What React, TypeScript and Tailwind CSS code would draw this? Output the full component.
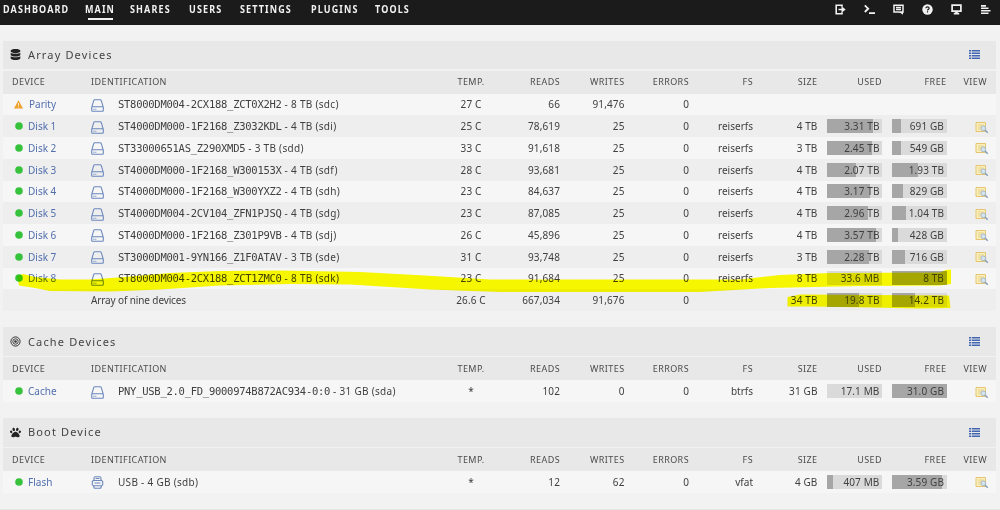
import { FaDatabase, FaPaw } from "react-icons/fa";

type Bar = { text: string; pct: number };

type Device = {
  name: string;
  status: "ok" | "warning";
  model: string;
  info: string;
  temp: string;
  reads: string;
  writes: string;
  errors: string;
  fs?: string;
  size?: string;
  used?: Bar;
  free?: Bar;
  usb?: boolean;
};

const NAV = [
  { label: "DASHBOARD", className: "w-[82px]" },
  { label: "MAIN", className: "w-[45px]" },
  { label: "SHARES", className: "w-[59px]" },
  { label: "USERS", className: "w-[51px]" },
  { label: "SETTINGS", className: "w-[71px]" },
  { label: "PLUGINS", className: "w-[64px]" },
  { label: "TOOLS", className: "w-[40px]" }
];

const ARRAY_DEVICES: Device[] = [
  { name: "Parity", status: "warning", model: "ST8000DM004-2CX188_ZCT0X2H2", info: "8 TB (sdc)", temp: "27 C", reads: "66", writes: "91,476", errors: "0" },
  { name: "Disk 1", status: "ok", model: "ST4000DM000-1F2168_Z3032KDL", info: "4 TB (sdi)", temp: "25 C", reads: "78,619", writes: "25", errors: "0", fs: "reiserfs", size: "4 TB", used: { text: "3.31 TB", pct: 83 }, free: { text: "691 GB", pct: 17 } },
  { name: "Disk 2", status: "ok", model: "ST33000651AS_Z290XMD5", info: "3 TB (sdd)", temp: "33 C", reads: "91,618", writes: "25", errors: "0", fs: "reiserfs", size: "3 TB", used: { text: "2.45 TB", pct: 82 }, free: { text: "549 GB", pct: 18 } },
  { name: "Disk 3", status: "ok", model: "ST4000DM000-1F2168_W300153X", info: "4 TB (sdf)", temp: "28 C", reads: "93,681", writes: "25", errors: "0", fs: "reiserfs", size: "4 TB", used: { text: "2.07 TB", pct: 52 }, free: { text: "1.93 TB", pct: 48 } },
  { name: "Disk 4", status: "ok", model: "ST4000DM000-1F2168_W300YXZ2", info: "4 TB (sdh)", temp: "23 C", reads: "84,637", writes: "25", errors: "0", fs: "reiserfs", size: "4 TB", used: { text: "3.17 TB", pct: 79 }, free: { text: "829 GB", pct: 21 } },
  { name: "Disk 5", status: "ok", model: "ST4000DM004-2CV104_ZFN1PJSQ", info: "4 TB (sdg)", temp: "23 C", reads: "87,085", writes: "25", errors: "0", fs: "reiserfs", size: "4 TB", used: { text: "2.96 TB", pct: 74 }, free: { text: "1.04 TB", pct: 26 } },
  { name: "Disk 6", status: "ok", model: "ST4000DM000-1F2168_Z301P9VB", info: "4 TB (sdj)", temp: "26 C", reads: "45,896", writes: "25", errors: "0", fs: "reiserfs", size: "4 TB", used: { text: "3.57 TB", pct: 89 }, free: { text: "428 GB", pct: 11 } },
  { name: "Disk 7", status: "ok", model: "ST3000DM001-9YN166_Z1F0ATAV", info: "3 TB (sde)", temp: "31 C", reads: "93,748", writes: "25", errors: "0", fs: "reiserfs", size: "3 TB", used: { text: "2.28 TB", pct: 76 }, free: { text: "716 GB", pct: 24 } },
  { name: "Disk 8", status: "ok", model: "ST8000DM004-2CX188_ZCT1ZMC0", info: "8 TB (sdk)", temp: "23 C", reads: "91,684", writes: "25", errors: "0", fs: "reiserfs", size: "8 TB", used: { text: "33.6 MB", pct: 0 }, free: { text: "8 TB", pct: 100 } }
];

const CACHE_DEVICES: Device[] = [
  { name: "Cache", status: "ok", model: "PNY_USB_2.0_FD_9000974B872AC934-0:0", info: "31 GB (sda)", temp: "*", reads: "102", writes: "0", errors: "0", fs: "btrfs", size: "31 GB", used: { text: "17.1 MB", pct: 0 }, free: { text: "31.0 GB", pct: 100 } }
];

const BOOT_DEVICES: Device[] = [
  { name: "Flash", status: "ok", model: "", info: "USB - 4 GB (sdb)", temp: "*", reads: "12", writes: "62", errors: "0", fs: "vfat", size: "4 GB", used: { text: "407 MB", pct: 10 }, free: { text: "3.59 GB", pct: 91 }, usb: true }
];

const GRID = "grid grid-cols-[88px_349px_62px_58px_64.5px_64.5px_64px_64.5px_64.5px_64.5px_48.5px] items-center";

const DriveIcon = () => (
  <svg width="13" height="13" viewBox="0 0 13 13" fill="none" stroke="#6c88bd" strokeWidth="1.1">
    <path d="M.7 8.3 2.7 1.6Q3 .7 3.8.7h5.4q.8 0 1.1.9l2 6.7M.7 8.3q0-.6.7-.6h10.2q.7 0 .7.6v3.3q0 .7-.7.7H1.4q-.7 0-.7-.7z" />
    <path d="M2.3 10.2h1.2M4.3 10.2h1" />
  </svg>
);

const UsbIcon = () => (
  <svg width="13" height="13" viewBox="0 0 13 13" fill="none" stroke="#6c88bd" strokeWidth="1.1">
    <path d="M3 4.5V2Q3 .7 4.3.7h4.4Q10 .7 10 2v2.5M1.3 5.5l1-1h8.4l1 1v3.3l-1 1H2.3l-1-1zM2.5 9.8l.5 1.7q.2.8 1 .8h5q.8 0 1-.8l.5-1.7M3.5 7h6M4.5 2.5h4" />
  </svg>
);

const ViewIcon = () => (
  <svg width="14" height="13" viewBox="0 0 14 13" fill="none">
    <path d="M1 1.5h9.5v9H1z" fill="#fbf0bd" stroke="#e3c46f" />
    <path d="M3 4h5.500M3 6h3M3 8h2" stroke="#e6cf85" />
    <circle cx="8.300" cy="7.300" r="2.400" fill="#d6e4ee" stroke="#a3b7c6" />
    <path d="m10.200 9.200 2.500 2.500" stroke="#859eb8" strokeWidth="1.500" />
  </svg>
);

const BullseyeIcon = () => (
  <svg width="11" height="11" viewBox="0 0 11 11" fill="none" stroke="#333">
    <circle cx="5.5" cy="5.5" r="4.6" strokeWidth="1" />
    <circle cx="5.5" cy="5.5" r="2.7" strokeWidth=".9" />
    <circle cx="5.5" cy="5.5" r="1.3" fill="#333" stroke="none" />
  </svg>
);

const ListIcon = () => (
  <svg width="11" height="9" viewBox="0 0 11 9" fill="#4267b0">
    <path d="M0 0h2v1.5H0zM2.7 0H11v1.5H2.7zM0 2.5h2V4H0zM2.7 2.5H11V4H2.7zM0 5h2v1.5H0zM2.7 5H11v1.5H2.7zM0 7.5h2V9H0zM2.7 7.5H11V9H2.7z" />
  </svg>
);

const StatusIcon = ({ status }: { status: Device["status"] }) =>
  status === "warning" ? (
    <svg width="9" height="9" viewBox="0 0 9 9" className="ml-[2px] mr-[6px] shrink-0">
      <path d="M4.5.2 9 8.6H0z" fill="#eda02c" />
      <path d="M4.5 3v2.7M4.5 6.5v1" stroke="#fff2d8" strokeWidth=".9" />
    </svg>
  ) : (
    <svg width="8" height="8" viewBox="0 0 8 8" className="ml-[2.5px] mr-[5.5px] shrink-0">
      <circle cx="4" cy="4" r="3.8" fill="#37c23c" />
    </svg>
  );

const UsageBar = ({ bar }: { bar?: Bar }) => {
  if (!bar) return <span />;
  return (
    <div className="relative ml-auto h-[14px] w-[55px] bg-[#dadada]">
      <div className="h-full bg-[#a6a6a6]" style={{ width: `${bar.pct}%` }} />
      <span className="absolute inset-y-0 right-[2.5px] leading-[14px] whitespace-nowrap">{bar.text}</span>
    </div>
  );
};

const TopBar = () => (
  <header className="flex h-[24.5px] justify-between bg-[#1c1b1b] pl-[3px] text-[#f2f2f2]">
    <nav className="flex text-[10px] font-bold tracking-[1.25px]">
      {NAV.map(item => (
        <div key={item.label} className={item.className}>
          <div className="mt-[2px] h-4 origin-left scale-x-[0.9] leading-[14px]">{item.label}</div>
          {item.label === "MAIN" && <div className="ml-[3px] h-[1.5px] w-[25px] bg-[#f2f2f2]" />}
        </div>
      ))}
    </nav>
    <div className="flex gap-[18px] pt-1 pr-[9px]">
      <svg width="11" height="11" viewBox="0 0 11 11" fill="none" stroke="#f2f2f2" strokeWidth="1.6">
        <path d="M7 2.8V1.3H1.2v8.4H7V8.2M3.5 5.5H8" />
        <path d="m6.500 2.3 4.2 3.2-4.2 3.2z" fill="#f2f2f2" stroke="none" />
      </svg>
      <svg width="11" height="11" viewBox="0 0 11 11" fill="none" stroke="#f2f2f2" strokeWidth="1.8">
        <path d="m.8 1.4 3.400 3.3L.8 8M5 9.2h6" />
      </svg>
      <svg width="11" height="11" viewBox="0 0 11 11" fill="none" stroke="#f2f2f2" strokeWidth="1.5">
        <path d="M1 1.2h9v6.800H1zM3 3.6h5M3 5.6h5" />
        <path d="M6 8h4v2.8z" fill="#f2f2f2" stroke="none" />
      </svg>
      <svg width="11" height="11" viewBox="0 0 11 11" fill="none">
        <circle cx="5.5" cy="5.5" r="5.2" fill="#f2f2f2" />
        <path d="M3.9 4.3q0-1.4 1.6-1.4t1.6 1.3q0 .8-.8 1.2-.8.4-.8 1M5.5 7.3v1.2" stroke="#1c1b1b" strokeWidth="1.2" />
      </svg>
      <svg width="11" height="11" viewBox="0 0 11 11" fill="none" stroke="#f2f2f2" strokeWidth="1.700">
        <path d="M1.100 1.2h8.800v6H1.100zM2.800 9.6h5.400" />
        <path d="M4.200 8h2.600v1.5H4.200z" fill="#f2f2f2" stroke="none" />
      </svg>
      <svg width="11" height="11" viewBox="0 0 11 11" fill="#f2f2f2">
        <path d="M1 1h5v1.700H1zM1 3.400h7.500v1.700H1zM1 5.900h9.500v1.700H1zM1 8.400h7.500v1.700H1z" />
      </svg>
    </div>
  </header>
);

const SectionTitle = ({ icon, title }: { icon: React.ReactNode; title: string }) => (
  <div className="flex h-[28.5px] items-center justify-between bg-[#e8e8e8] pr-[16px] pl-[7px]">
    <div className="flex items-center gap-[7px] text-[11px] tracking-[1.15px] text-[#444]">
      {icon}
      <span>{title}</span>
    </div>
    <ListIcon />
  </div>
);

const TableHead = () => (
  <div className={`${GRID} mt-[1.5px] h-[23px] bg-[#e8e8e8] text-right text-[9px] tracking-[0.42px] text-[#4c4c4c]`}>
    <span className="pl-[9px] text-left">DEVICE</span>
    <span className="text-left">IDENTIFICATION</span>
    <span className="text-center">TEMP.</span>
    <span>READS</span>
    <span>WRITES</span>
    <span>ERRORS</span>
    <span>FS</span>
    <span>SIZE</span>
    <span>USED</span>
    <span>FREE</span>
    <span className="pr-[8px]">VIEW</span>
  </div>
);

const DeviceRow = ({ device }: { device: Device }) => (
  <div className={`${GRID} h-[21.75px] text-right odd:bg-[#f6f6f6] even:bg-[#eeeeee]`}>
    <div className="flex items-center pl-[9px] tracking-normal text-[#526fae]">
      <StatusIcon status={device.status} />
      {device.name}
    </div>
    <div className="flex items-center gap-[14px] text-left">
      <span className="pt-[2px]">{device.usb ? <UsbIcon /> : <DriveIcon />}</span>
      <span className="whitespace-pre tracking-[0.3px]">
        {device.model && <span className="font-['DejaVu_Sans_Mono',monospace] text-[10.5px] tracking-[-0.26px]">{device.model}</span>}
        {device.model && " - "}
        {device.info}
      </span>
    </div>
    <span className="text-center">{device.temp}</span>
    <span>{device.reads}</span>
    <span>{device.writes}</span>
    <span>{device.errors}</span>
    <span className="tracking-normal">{device.fs}</span>
    <span>{device.size}</span>
    <UsageBar bar={device.used} />
    <UsageBar bar={device.free} />
    <span className="flex justify-end pt-[2px] pr-[6.5px]">{device.size && <ViewIcon />}</span>
  </div>
);

const TotalRow = () => (
  <div className={`${GRID} h-[22px] bg-[#eeeeee] text-right`}>
    <span />
    <span className="text-left tracking-[-0.12px]">Array of nine devices</span>
    <span className="text-center">26.6 C</span>
    <span>667,034</span>
    <span>91,676</span>
    <span>0</span>
    <span />
    <span>34 TB</span>
    <UsageBar bar={{ text: "19.8 TB", pct: 58 }} />
    <UsageBar bar={{ text: "14.2 TB", pct: 42 }} />
    <span />
  </div>
);

// Marker strokes over Disk 8 and the totals
const Highlighter = () => (
  <svg width="1000" height="510" viewBox="0 0 1000 510" fill="#ffff00" className="pointer-events-none absolute top-0 left-0 mix-blend-multiply">
    <path d="M17 276 23 274 35 277 60 279.500 90 279.500 125 277 170 273 220 271 280 270.500 360 272 425 275.500 490 279.500 740 279.500 780 275 830 273 940 272.500 946 270 951 269.500V284L940 285.500 860 286 770 288 700 292 500 292 430 289.500 350 284.500 290 284 220 285.500 160 289.500 110 291.500 50 291 35 288 19 285.500z" />
    <path d="M787.500 297 800 294.500 949 295.500 950.500 308 920 308.500 870 307.500 810 306.500 787.500 306.500z" />
  </svg>
);

export default function App() {
  return (
    <div className="relative h-[510px] w-[1000px] overflow-hidden bg-[#f2f2f2] font-['Noto_Sans',sans-serif] text-[10px] leading-[14px] tracking-[0.12px] text-[#404040]">
      <TopBar />
      <main className="flex flex-col gap-4 pt-[16px] pr-[4.5px] pl-[3px]">
        <section>
          <SectionTitle icon={<FaDatabase size={11} color="#222" />} title="Array Devices" />
          <TableHead />
          <div>
            {ARRAY_DEVICES.map(d => (
              <DeviceRow key={d.name} device={d} />
            ))}
            <TotalRow />
          </div>
        </section>
        <section>
          <SectionTitle icon={<BullseyeIcon />} title="Cache Devices" />
          <TableHead />
          <div>
            {CACHE_DEVICES.map(d => (
              <DeviceRow key={d.name} device={d} />
            ))}
          </div>
        </section>
        <section>
          <SectionTitle icon={<FaPaw size={11} color="#222" />} title="Boot Device" />
          <TableHead />
          <div>
            {BOOT_DEVICES.map(d => (
              <DeviceRow key={d.name} device={d} />
            ))}
          </div>
        </section>
      </main>
      <div className="mt-[16px] h-[3px] bg-[#e4e4e4]" />
      <Highlighter />
    </div>
  );
}
